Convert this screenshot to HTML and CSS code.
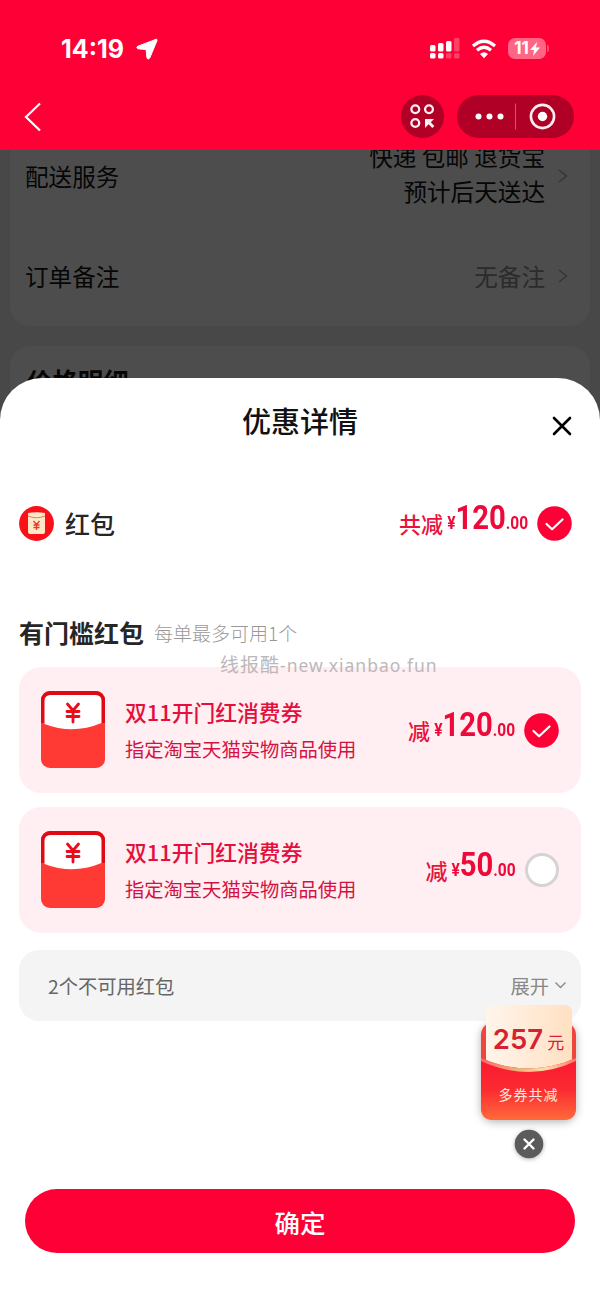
FILE: index.html
```html
<!DOCTYPE html>
<html lang="zh-CN">
<head>
<meta charset="utf-8">
<title>优惠详情</title>
<link rel="stylesheet" href="styles.css">
</head>
<body>
<svg class="defs" width="0" height="0">
  <defs>
    <symbol id="check" viewBox="0 0 35 35"><circle cx="17.5" cy="17.5" r="17.3" fill="#fe0036"/><path d="M9.5 18l5.6 5.2L25.5 13.5" fill="none" stroke="#fff" stroke-width="2.2" stroke-linecap="round" stroke-linejoin="round"/></symbol>
    <symbol id="chev" viewBox="0 0 12 16"><path d="M2 2l7.5 6L2 14" fill="none" stroke="#343434" stroke-width="1.4"/></symbol>
    <symbol id="packet" viewBox="0 0 64 78"><rect width="64" height="77" rx="9" fill="#ff3933"/><path d="M0 32V9a9 9 0 0 1 9-9h46a9 9 0 0 1 9 9v23z" fill="#df0b13"/><path d="M3.5 32V9.5a5.5 5.5 0 0 1 5.500-5.500h46a5.500 5.500 0 0 1 5.500 5.500V32Q32 44 3.500 33z" fill="#fff"/><path d="M26.500 13l5.500 6.500 5.500-6.500M32 19.500V31M26 20.500h12M26 25.500h12" fill="none" stroke="#e80c1c" stroke-width="2.800" stroke-linecap="round"/></symbol>
  </defs>
</svg>
<header class="top">
  <div class="status">
    <span class="time">14:19</span>
    <svg class="loc" width="22" height="22" viewBox="0 0 22 22"><path d="M20.300 1.200L1.600 8.300q-1.700 1.200 .2 2.500l8.300.7.900 8.600q1.300 1.800 2.700 0l7.300-17.500q.2-1.500-.7-1.400z" fill="#fff" stroke="#fff" stroke-width="1" stroke-linejoin="round"/></svg>
    <svg class="signal" width="30" height="22" viewBox="0 0 30 22" fill="#fff"><rect y="7" width="5.500" height="6.500" rx="1.500"/><rect x="8" y="5" width="5.500" height="8.500" rx="1.500"/><rect x="16" y="3" width="5.500" height="10.500" rx="1.500"/><rect y="15" width="5.500" height="5.500" rx="1.500"/><rect x="8" y="15" width="5.500" height="5.500" rx="1.500"/><g opacity=".25"><rect x="24" y="0" width="5.500" height="13.500" rx="1.500"/><rect x="16" y="15" width="5.500" height="5.500" rx="1.500"/><rect x="24" y="15" width="5.500" height="5.500" rx="1.500"/></g></svg>
    <svg class="wifi" width="26" height="20" viewBox="0 0 26 20"><path d="M2 7Q13-2.500 24 7M6 11.200q7-6 14 0" fill="none" stroke="#fff" stroke-width="3.300"/><path d="M9 15q4-3.400 8 0l-4 4.300z" fill="#fff"/></svg>
    <span class="battery">11<svg width="10" height="14" viewBox="0 0 10 14"><path d="M7 0L0 8h4l-1 6 7-8.500H6z" fill="#fff"/></svg></span><i class="nub"></i>
  </div>
  <nav class="nav">
    <svg class="back" width="20" height="30" viewBox="0 0 20 30"><path d="M17 1.500L3 15l14 13.500" fill="none" stroke="#fff" stroke-width="2.200"/></svg>
    <svg width="43" height="43" viewBox="0 0 43 43"><circle cx="21.500" cy="21.500" r="21.500" fill="#b00026"/><g fill="none" stroke="#ffeef2" stroke-width="2.300"><circle cx="14.300" cy="14.300" r="3.900"/><circle cx="28" cy="14.300" r="3.900"/><circle cx="14.300" cy="28" r="3.900"/></g><path d="M24 24h9l-3.200 3.200 3.500 3.800-2 2-3.700-3.700L24 33z" fill="#ffeef2"/></svg>
    <svg width="117" height="43" viewBox="0 0 117 43"><rect width="117" height="43" rx="21.500" fill="#b00026"/><g fill="#fff"><circle cx="21.500" cy="21.500" r="3"/><circle cx="32.500" cy="21.500" r="3"/><circle cx="43.500" cy="21.500" r="3"/><circle cx="85.500" cy="21.500" r="4.700"/></g><path d="M58.500 8.500v26" stroke="#d0566f" stroke-width="1"/><circle cx="85.500" cy="21.500" r="11.600" fill="none" stroke="#ffeef2" stroke-width="2.600"/></svg>
  </nav>
</header>
<section class="dimmed">
  <div class="panel order">
    <div class="line ship"><span>配送服务</span><span class="val">快递 包邮 退货宝<br>预计后天送达</span><svg width="12" height="16"><use href="#chev"/></svg></div>
    <div class="line"><span>订单备注</span><span class="val muted">无备注</span><svg width="12" height="16"><use href="#chev"/></svg></div>
  </div>
  <div class="panel price">价格明细</div>
</section>
<main class="sheet">
  <div class="title">优惠详情<svg class="close" width="20" height="20" viewBox="0 0 20 20"><path d="M2 2l16 16M18 2L2 18" stroke="#000" stroke-width="2.600" stroke-linecap="round"/></svg></div>
  <div class="summary">
    <svg width="35" height="35" viewBox="0 0 35 35"><circle cx="17.500" cy="17.500" r="17.400" fill="#fa1019"/><path d="M9 7q8.500-1.500 17 0v19q0 2-2 2H11q-2 0-2-2z" fill="#ffe8c5"/><path d="M9 10q8.500 3.500 17 0" fill="none" stroke="#d98161" stroke-width="1"/><path d="M14.500 15l3 3.500 3-3.500M17.500 18.500V24M14.500 19h6M14.500 21.500h6" stroke="#e43a2c" stroke-width="1.300" fill="none"/></svg>
    <h2>红包</h2>
    <span class="cut">共减</span><span class="amount w120"><small>¥</small>120<small>.00</small></span>
    <svg width="35" height="35"><use href="#check"/></svg>
  </div>
  <div class="group"><h2>有门槛红包</h2><span>每单最多可用1个</span></div>
  <div class="coupon">
    <svg width="64" height="78"><use href="#packet"/></svg>
    <div class="desc"><b>双11开门红消费券</b><span>指定淘宝天猫实物商品使用</span></div>
    <span class="cut">减</span><span class="amount w120"><small>¥</small>120<small>.00</small></span>
    <svg width="35" height="35"><use href="#check"/></svg>
  </div>
  <div class="coupon">
    <svg width="64" height="78"><use href="#packet"/></svg>
    <div class="desc"><b>双11开门红消费券</b><span>指定淘宝天猫实物商品使用</span></div>
    <span class="cut">减</span><span class="amount w50"><small>¥</small>50<small>.00</small></span>
    <i class="radio"></i>
  </div>
  <div class="unused"><span>2个不可用红包</span><span class="expand">展开</span><svg width="13" height="9" viewBox="0 0 13 9"><path d="M1.500 1.500l5 5 5-5" fill="none" stroke="#888" stroke-width="1.400"/></svg></div>
  <button class="confirm">确定</button>
</main>
<div class="watermark"><span>线报酷</span>-new.xianbao.fun</div>
<aside class="promo">
  <svg class="promo-bg" width="111" height="130" viewBox="0 0 111 130">
    <defs>
      <linearGradient id="paper" x1="0" y1="0" x2="1" y2="0"><stop offset="0" stop-color="#fff5eb"/><stop offset="1" stop-color="#ffe0c2"/></linearGradient>
      <linearGradient id="front" x1="0" y1="0" x2="0" y2="1"><stop offset="0" stop-color="#fb1930"/><stop offset=".5" stop-color="#fa2a32"/><stop offset="1" stop-color="#ff6a3a"/></linearGradient>
      <linearGradient id="rim" x1="0" y1="0" x2="1" y2="0"><stop offset="0" stop-color="#ff6b65"/><stop offset=".4" stop-color="#e9b67c"/><stop offset=".7" stop-color="#ffdca8"/><stop offset="1" stop-color="#ff7468"/></linearGradient>
    </defs>
    <rect class="shade" x="8" y="21" width="95" height="98" rx="13" fill="#f0453c"/>
    <rect x="13" y="4" width="86" height="75" rx="7" fill="url(#paper)"/>
    <path d="M8 57q47.500 21 95 0v50q0 12-12 12H20q-12 0-12-12z" fill="url(#front)"/>
    <path d="M8 57q47.500 21 95 0v3q-47.500 22-95 0z" fill="url(#rim)"/>
  </svg>
  <div class="promo-text"><div class="sum"><b>257</b><span>元</span></div><div class="note">多券共减</div></div>
  <svg class="dismiss" width="30" height="30" viewBox="0 0 30 30"><circle cx="15" cy="15" r="14.300" fill="#5b5b5b"/><path d="M10.500 10.500l9 9M19.500 10.500l-9 9" stroke="#fff" stroke-width="2.400" stroke-linecap="round"/></svg>
</aside>
</body>
</html>
```
FILE: styles.css
```css
* { box-sizing: border-box; }
body { margin: 0; width: 600px; height: 1304px; position: relative; overflow: hidden; background: #fff; font-family: "Noto Sans CJK SC", sans-serif; }
svg { display: block; flex: none; }
.defs { position: absolute; }
.top { height: 150px; background: #fe0036; }
.status { display: flex; align-items: center; height: 95px; padding: 2px 0 0 61px; color: #fff; font-family: Inter, sans-serif; }
.time { width: 69px; font-size: 25px; font-weight: 700; white-space: nowrap; letter-spacing: 0; }
.loc { margin-left: 6px; }
.signal { margin-left: 272px; }
.wifi { margin-left: 11px; }
.battery { display: flex; align-items: center; justify-content: center; gap: 1px; width: 38px; height: 21px; margin-left: 11px; border-radius: 7px; background: #ff6685; font-size: 17px; font-weight: 700; line-height: 21px; }
.nub { width: 2px; height: 7px; margin-left: 1px; border-radius: 0 2px 2px 0; background: #ff4d72; }
.nav { display: flex; align-items: center; height: 43px; padding-left: 23px; }
.back { margin-right: 358px; }
.nav svg:last-child { margin-left: 13px; }
.dimmed { height: 270px; padding: 0 10px; background: #484848; overflow: hidden; }
.panel { background: #4d4d4d; color: #060606; }
.order { height: 176px; border-radius: 0 0 20px 20px; overflow: hidden; }
.line { display: flex; align-items: center; height: 70px; margin-top: 17px; padding: 0 21px 0 15px; font-size: 23.6px; line-height: 35px; }
.line.ship { height: 52px; margin: 0; }
.line.ship + .line { margin-top: 39px; }
.val { margin-left: auto; margin-right: 12px; text-align: right; }
.ship .val { margin-top: -5px; }
.muted { color: #2b2b2b; }
.price { height: 100px; margin-top: 20px; padding: 16px 17px; border-radius: 20px; font-size: 25.4px; font-weight: 700; line-height: 36px; }
.sheet { position: relative; height: 926px; margin-top: -42px; padding: 0 19px; border-radius: 42px 42px 0 0; background: #fff; }
.title { display: flex; align-items: center; justify-content: center; height: 84px; padding-left: 20px; color: #111; font-size: 29px; font-weight: 500; }
.close { margin: 12px -11px 0 194px; }
.title { justify-content: flex-end; padding: 0 20px 0 0; }
.summary { display: flex; align-items: center; height: 36px; margin-top: 43px; padding-right: 9px; }
h2 { margin: 0; color: #262626; font-size: 25px; font-weight: 500; line-height: 36px; }
.summary h2 { margin-left: 11px; }
.cut { margin-left: auto; color: #e8123c; font-size: 22px; font-weight: 500; line-height: 32px; }
.amount { display: block; margin: -7px 9px 0 4px; color: #ed0a3a; font: 700 34px/42px Roboto, sans-serif; white-space: nowrap; transform: scaleX(.86); transform-origin: right; }
.amount small { font-size: 18px; }
.w120 { margin-left: -9px; }
.w50 { margin-left: -6px; }
.group { display: flex; align-items: center; height: 36px; margin-top: 73px; }
.group h2 { font-weight: 700; }
.group span { margin-left: 10px; color: #999; font-size: 19px; font-weight: 300; }
.coupon { display: flex; align-items: center; height: 126px; margin-top: 17px; padding: 0 22px; border-radius: 22px; background: #ffeef2; }
.coupon + .coupon { margin-top: 14px; }
.desc { display: flex; flex-direction: column; gap: 5px; margin-left: 20px; margin-top: -2px; color: #d41242; white-space: nowrap; font-size: 19.3px; line-height: 30px; }
.desc b { color: #e40f3c; font-size: 21.8px; font-weight: 500; line-height: 34px; }
.radio { width: 34px; height: 34px; border: 3px solid #d5d3d4; border-radius: 50%; background: #fff; flex: none; }
.unused { display: flex; align-items: center; height: 71px; margin-top: 17px; padding: 0 14px 0 29px; border-radius: 20px; background: #f4f4f4; color: #666; font-size: 19.3px; }
.expand { margin-left: auto; margin-right: 5px; color: #888; }
.confirm { display: block; width: 550px; height: 64px; margin: 168px 0 0 6px; padding: 0; border: 0; border-radius: 32px; background: #fe0036; color: #fff; font: 500 25.5px "Noto Sans CJK SC", sans-serif; }
.watermark { position: absolute; left: 220px; top: 650px; color: #bcb8b9; font: 17.500px/28px "Noto Sans", sans-serif; letter-spacing: 1px; white-space: nowrap; }
.watermark span { font-family: "Noto Sans CJK SC", sans-serif; font-size: 19px; }
.promo { position: absolute; left: 473px; top: 1001px; width: 111px; }
.promo-bg { overflow: visible; }
.shade { filter: drop-shadow(0 2px 4px rgba(0,0,0,.3)); }
.promo-text { margin-top: -130px; height: 128px; text-align: center; color: #d82032; }
.sum { display: flex; align-items: baseline; justify-content: center; gap: 4px; padding-top: 16px; height: 76px; line-height: 44px; font-size: 17px; }
.sum b { font-family: Inter, sans-serif; font-size: 27.500px; font-weight: 600; }
.note { color: #ffe9df; font-size: 14px; letter-spacing: 1px; line-height: 34px; }
.dismiss { margin: 0 auto; filter: drop-shadow(0 1px 2px rgba(0,0,0,.3)); }
```
